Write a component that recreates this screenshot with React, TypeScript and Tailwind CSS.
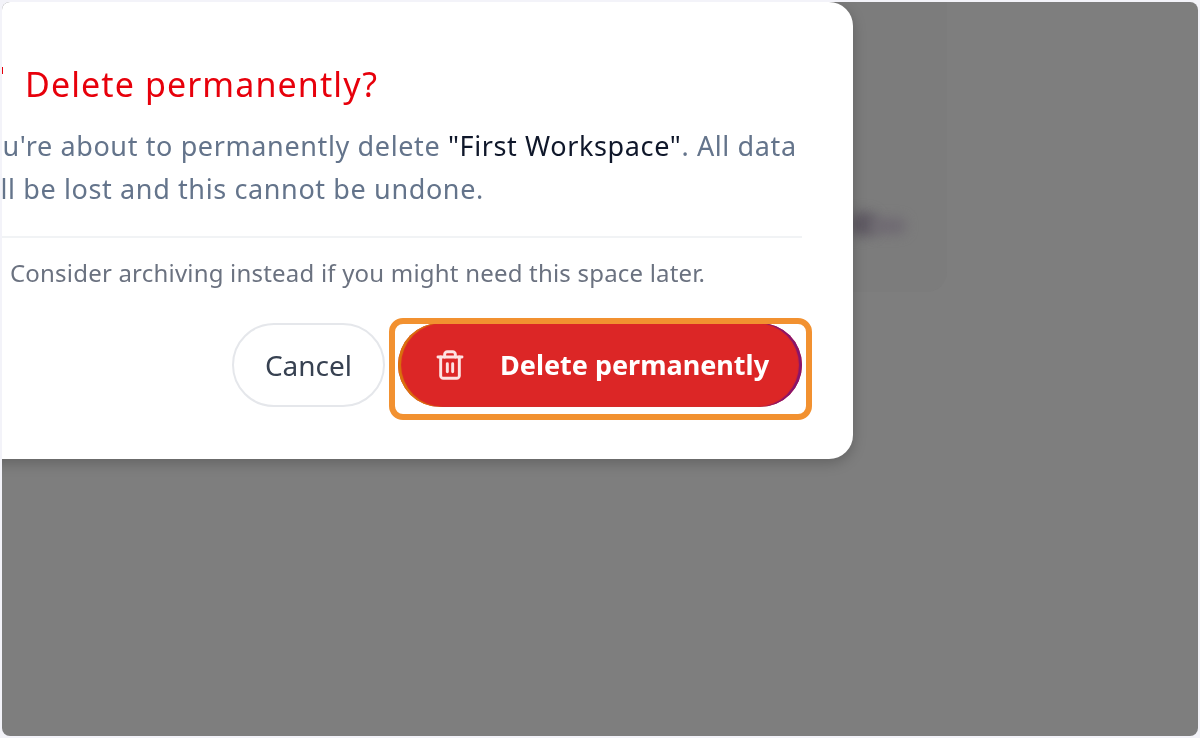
import { Trash2 } from 'lucide-react';

export default function App() {
  return (
    <div className="h-[738px] w-[1200px] bg-[#f3f3f9] p-[2px] font-['Noto_Sans','Open_Sans',sans-serif]">
      <div className="relative h-full w-full overflow-hidden rounded-[8px] bg-[#7e7e7e]">
        {/* faint card behind the backdrop */}
        <div className="absolute left-[700px] top-[-20px] h-[310px] w-[245px] rounded-[20px] bg-[#7c7c7c]" />
        <div className="absolute left-[846px] top-[210px] h-[24px] w-[30px] rounded-full bg-[#5f5a63] blur-[6px]" />
        <div className="absolute left-[868px] top-[216px] h-[16px] w-[36px] rounded-full bg-[#6f6a72] blur-[6px]" />

        {/* dialog, cut off on the left by the frame */}
        <div className="absolute left-[-82px] top-0 w-[933px] rounded-[24px] bg-white px-[51px] pb-[52px] pt-[60px] shadow-[0_4px_14px_rgba(0,0,0,0.22)] blur-[0.5px]">
          <div className="flex items-center gap-[22px]">
            <svg className="mb-[6px] h-[28px] w-[32px] shrink-0" viewBox="0 0 32 28">
              <rect x="30" y="0" width="2" height="7" fill="#e7000b" />
              <rect x="29" y="7" width="2" height="21" fill="#fcd5d5" />
            </svg>
            <h2 className="text-[34px] font-normal leading-[44px] tracking-[1.1px] text-[#e7000b]">Delete permanently?</h2>
          </div>
          <p className="mt-[18px] whitespace-nowrap text-[27px] leading-[43px] tracking-[0.62px] text-[#64748b]">
            You're about to permanently delete <span className="text-[#0f172a]">"First Workspace"</span>. All data
            <br />
            will be lost and this cannot be undone.
          </p>
          <div className="mt-[26px] border-t-2 border-[#f1f3f5] pt-[18px] text-[24px] leading-[34px] tracking-[0.2px] text-[#6b7280]">
            <span className="pl-[39px]">Consider archiving instead if you might need this space later.</span>
          </div>
          <div className="mt-[33px] flex justify-end gap-[13px]">
            <button className="h-[84px] w-[153px] rounded-full border-2 border-[#e5e7eb] bg-white text-[28px] text-[#374151]">
              Cancel
            </button>
            <button className="flex h-[84px] w-[404px] items-center rounded-full bg-[#dc2626] pl-[36px] text-[27px] font-bold text-white shadow-[inset_3px_0_1px_#d9730d,inset_-3px_0_1px_#86146e]">
              <Trash2 className="h-[32px] w-[32px] text-[#fde2e2]" strokeWidth={2.2} />
              <span className="ml-[34px]">Delete permanently</span>
            </button>
          </div>
        </div>

        {/* step highlight around the button */}
        <div className="absolute left-[387px] top-[316px] h-[102px] w-[423px] rounded-[14px] border-[6px] border-[#f29130]" />
      </div>
    </div>
  );
}
